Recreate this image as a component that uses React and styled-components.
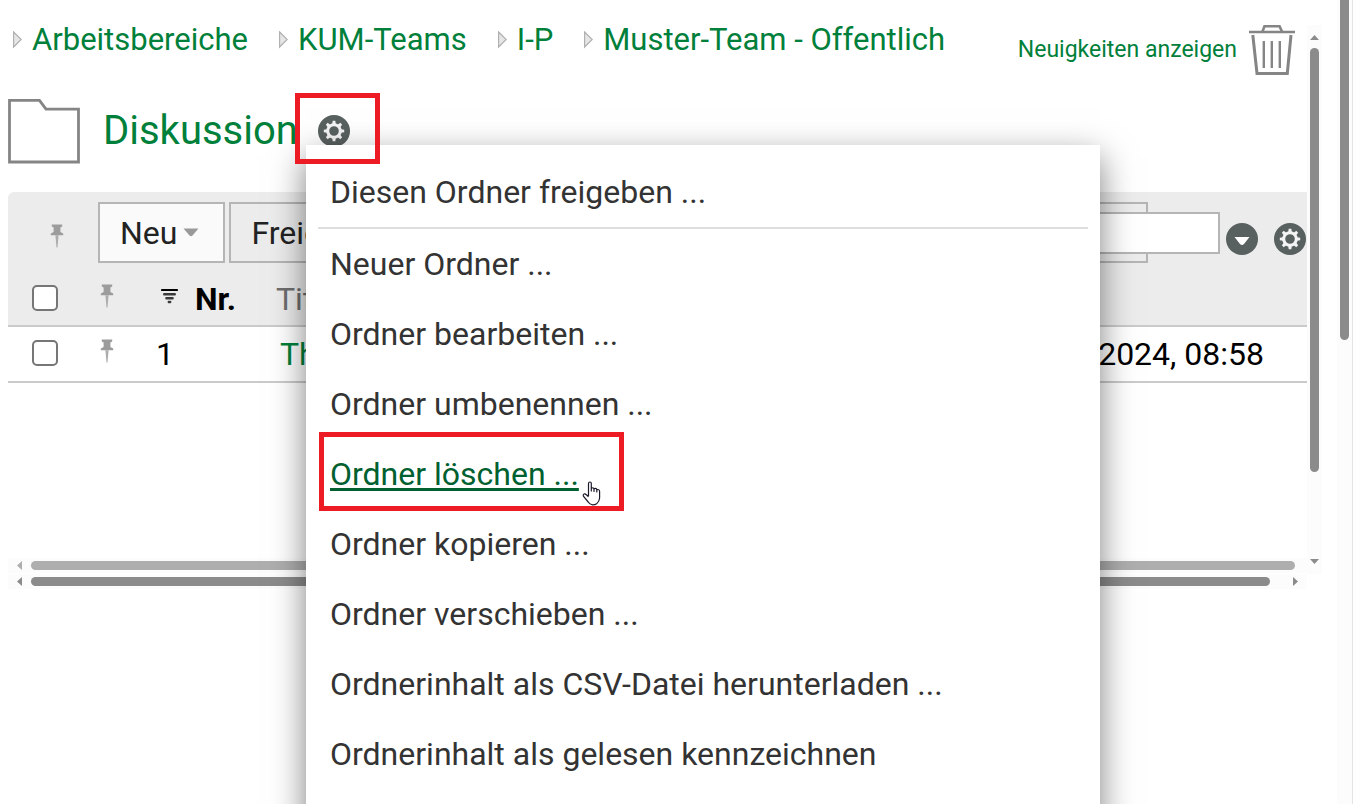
import React from 'react';
import styled, { createGlobalStyle } from 'styled-components';

const green = '#00803a';
const darkGreen = '#006030';
const barGray = '#8b8b8b';
const barGrayLight = '#aeaeae';
const line = '#b5b5b5';

const GlobalStyle = createGlobalStyle`
  * {
    box-sizing: border-box;
  }
  body {
    margin: 0;
    background: #fff;
    color: #000;
    font-family: Roboto, 'Noto Sans', sans-serif;
    font-size: 32px;
    line-height: 40px;
  }
`;

const Shell = styled.div`
  position: relative;
  display: flex;
  height: 100vh;
  overflow: hidden;
`;

const Main = styled.main`
  flex: 1;
  min-width: 0;
  padding: 0 15px 0 8px;
`;

const Pane = styled.div`
  display: flex;
  height: 574px;
`;

const Content = styled.div`
  flex: 1;
  min-width: 0;
  display: flex;
  flex-direction: column;
`;

const Header = styled.header`
  display: flex;
  align-items: center;
  justify-content: space-between;
  height: 60px;
  margin-top: 20px;
  padding-right: 12px;
`;

const Breadcrumbs = styled.nav`
  display: flex;
  align-self: flex-start;
  gap: 30px;
  padding-left: 4px;
`;

const Crumb = styled.span`
  display: flex;
  align-items: center;
  gap: 10px;
  white-space: nowrap;
`;

const Link = styled.a`
  color: ${green};
  text-decoration: none;
  font-size: ${props => props.$size || 32}px;
`;

const HeaderLinks = styled.div`
  display: flex;
  align-items: center;
  gap: 12px;
`;

const IconButton = styled.button`
  display: flex;
  padding: 0;
  border: 0;
  background: none;
  cursor: pointer;
`;

const TitleRow = styled.div`
  display: flex;
  align-items: center;
  height: 66px;
  margin-top: 18px;
`;

const Title = styled.h1`
  margin: 0 20px 0 23px;
  color: ${green};
  font-size: 40px;
  line-height: 48px;
  font-weight: 400;
`;

const Toolbar = styled.div`
  position: relative;
  display: flex;
  gap: 4px;
  height: 80px;
  margin-top: 28px;
  padding: 10px 159px 9px 42px;
  background: #ececec;
  border-radius: 6px 0 0 0;
`;

const ToolbarPin = styled.span`
  display: flex;
  align-items: center;
  width: 44px;
  padding-top: 6px;
`;

const ToolButton = styled.button`
  display: flex;
  align-items: center;
  gap: 6px;
  height: 61px;
  padding: 0 ${props => (props.$wide ? '20px' : '24px')} 0 20px;
  border: 2px solid ${line};
  background: ${props => (props.$active ? '#fafafa' : '#ececec')};
  color: #222;
  font: inherit;
  white-space: nowrap;
  flex: ${props => (props.$wide ? '1' : 'none')};
`;

// the search box lies over the end of the button strip
const Search = styled.form`
  position: absolute;
  top: 19px;
  right: 1px;
  display: flex;
  align-items: center;
`;

const SearchInput = styled.input`
  width: 300px;
  height: 42px;
  margin-right: 6px;
  padding: 0 8px;
  border: 2px solid ${line};
  background: #fff;
  font: inherit;
`;

const SearchIcons = styled.div`
  display: flex;
  gap: 16px;
  padding-top: 12px;
`;

const Table = styled.table`
  width: 100%;
  table-layout: fixed;
  border-collapse: collapse;

  th,
  td {
    height: 54px;
    padding: 0;
    text-align: left;
    font-weight: 400;
    white-space: nowrap;
    border-bottom: 2px solid #cacaca;
  }
  thead {
    background: #ececec;
  }
  td {
    height: 56px;
  }
`;

const Col = styled.col`
  width: ${props => props.$width};
`;

const Cell = styled.div`
  display: flex;
  align-items: center;
  justify-content: ${props => (props.$end ? 'flex-end' : 'flex-start')};
  gap: 17px;
  padding: 0 ${props => (props.$end ? '43px' : '0')} ${props => props.$raise || 0}px
    ${props => props.$left || 0}px;
  color: ${props => props.$color || '#000'};
  font-weight: ${props => (props.$bold ? 700 : 400)};

  svg {
    flex: none;
  }
`;

const Checkbox = styled.input`
  appearance: none;
  width: 26px;
  height: 26px;
  margin: 0;
  border: 2px solid #767676;
  border-radius: 5px;
  background: #fff;
`;

const VerticalBar = styled.div`
  display: flex;
  flex-direction: column;
  align-items: center;
  gap: 8px;
  width: 15px;
  margin-top: 25px;
  padding: 10px 0;
  background: #fcfcfc;
`;

const HorizontalBar = styled.div`
  display: flex;
  align-items: center;
  gap: 9px;
  height: 15px;
  margin-right: ${props => (props.$inner ? '0' : '15px')};
  margin-top: ${props => (props.$inner ? 'auto' : '0')};
  margin-bottom: ${props => (props.$inner ? '1px' : '0')};
  padding: 0 ${props => (props.$inner ? '12px' : '9px')} 0 9px;
  background: #fcfcfc;
`;

const Thumb = styled.div`
  flex: ${props => props.$size || '1'};
  width: ${props => (props.$vertical ? '9px' : 'auto')};
  height: ${props => (props.$vertical ? 'auto' : '9px')};
  border-radius: 5px;
  background: ${props => (props.$light ? barGrayLight : barGray)};
`;

const Spacer = styled.div`
  flex: ${props => props.$size};
`;

const WindowBar = styled.div`
  width: 16px;
  padding-left: 3px;
  background: #fcfcfc;
  border-right: 1px solid #e4e4e4;
`;

const WindowThumb = styled.div`
  width: 9px;
  height: 340px;
  border-radius: 0 0 5px 5px;
  background: ${barGray};
`;

const Menu = styled.ul`
  position: absolute;
  top: 145px;
  left: 306px;
  right: 253px;
  bottom: -60px;
  margin: 0;
  padding: 12px;
  list-style: none;
  background: #fff;
  box-shadow: 0 12px 32px rgba(0, 0, 0, 0.5);
`;

const MenuItem = styled.li`
  padding: 15px 12px;
  border-bottom: ${props => (props.$separated ? '2px solid #dedede' : '0')};
`;

const MenuLink = styled.a`
  color: ${props => (props.$hovered ? darkGreen : '#333')};
  text-decoration: ${props => (props.$hovered ? 'underline' : 'none')};
  text-decoration-thickness: 3px;
  text-underline-offset: 3px;
  text-decoration-skip-ink: none;
`;

const Mark = styled.div`
  position: absolute;
  top: ${props => props.$top}px;
  left: ${props => props.$left}px;
  width: ${props => props.$width}px;
  height: ${props => props.$height}px;
  border: 5px solid #ed1c24;
  pointer-events: none;
`;

const Pointer = styled.svg`
  position: absolute;
  top: 481px;
  left: 582px;
`;

function CrumbArrow() {
  return (
    <svg width="10" height="18" viewBox="0 0 10 18" aria-hidden="true">
      <path d="M1.6 1 L9.2 8.5 L1.6 16 Z" fill="#e6e6e6" stroke="#b0b0b0" strokeWidth="1.2" />
    </svg>
  );
}

function FolderIcon() {
  return (
    <svg width="72" height="66" viewBox="0 0 72 66" aria-hidden="true">
      <path d="M1.5 2.4 H31.5 L38 11.2 H70.5 V64 H1.5 Z" fill="#fff" stroke="#858585" strokeWidth="2.8" />
    </svg>
  );
}

function TrashIcon() {
  return (
    <svg width="46" height="50" viewBox="0 0 46 50" fill="none" stroke="#858585" aria-hidden="true">
      <path d="M0 7 H46" strokeWidth="2.6" />
      <path d="M13.5 6.5 L15.5 1.2 H30.5 L33 6.5" strokeWidth="2.6" />
      <path d="M3.8 10 L8 48.5 H38.3 L42 10" strokeWidth="3" />
      <path d="M14.8 16 V43 M22.8 16 V43 M30.8 16 V43" strokeWidth="2.4" />
    </svg>
  );
}

function GearIcon() {
  const teeth = [0, 45, 90, 135, 180, 225, 270, 315];
  return (
    <svg width="32" height="32" viewBox="0 0 32 32" aria-hidden="true">
      <circle cx="16" cy="16" r="16" fill="#596060" />
      <circle cx="16" cy="16" r="6.3" fill="none" stroke="#f4f4f4" strokeWidth="3" />
      {teeth.map(angle => (
        <path key={angle} d="M14.2 9 L14.7 5.8 H17.3 L17.8 9 Z" fill="#f4f4f4" transform={`rotate(${angle} 16 16)`} />
      ))}
    </svg>
  );
}

function DropIcon() {
  return (
    <svg width="32" height="32" viewBox="0 0 32 32" aria-hidden="true">
      <circle cx="16" cy="16" r="16" fill="#596060" />
      <path d="M8.5 14 H23.5 L18 21 Q16 23 14 21 Z" fill="#fff" />
    </svg>
  );
}

function PinIcon() {
  return (
    <svg width="14" height="24" viewBox="0 0 14 24" aria-hidden="true">
      <path d="M1.8 0.5 H12.2 V2.6 L10.4 3.4 V8 L13.2 9.6 V11.2 H0.8 V9.6 L3.6 8 V3.4 L1.8 2.6 Z" fill="#9c9c9c" />
      <path d="M5.4 11.2 H8.6 L7.5 23.5 H6.5 Z" fill="#adadad" />
    </svg>
  );
}

function CaretIcon() {
  return (
    <svg width="16" height="9" viewBox="0 0 16 9" aria-hidden="true">
      <path d="M0.5 0.5 H15.5 L9.5 7.5 Q8 9 6.5 7.5 Z" fill="#999" />
    </svg>
  );
}

function SortIcon() {
  return (
    <svg width="17" height="22" viewBox="0 0 17 22" strokeLinecap="round" aria-hidden="true">
      <path d="M1 2 H16" stroke="#000" strokeWidth="2.2" />
      <path d="M3.2 6.2 H13.8 M5.4 10.2 H11.6 M7.8 14 H9.2" stroke="#3a3a3a" strokeWidth="2.4" />
    </svg>
  );
}

const arrowShapes = {
  up: [9, 5, '0,5 4.5,0 9,5'],
  down: [9, 5, '0,0 9,0 4.5,5'],
  left: [5, 9, '5,0 5,9 0,4.5'],
  right: [5, 9, '0,0 5,4.5 0,9']
};

function BarArrow({ direction, light }) {
  const [width, height, points] = arrowShapes[direction];
  return (
    <svg width={width} height={height} aria-hidden="true">
      <polygon points={points} fill={light ? barGrayLight : barGray} />
    </svg>
  );
}

function HandPointer() {
  return (
    <Pointer width="19" height="25" viewBox="0 0 19 25" aria-hidden="true">
      <path
        d="M6.5 15 V2.5 Q6.5 1 8 1 Q9.3 1 9.3 2.5 V10 V8 Q9.3 6.6 10.7 6.8 Q12 6.8 12 8.2 V10.5 V8.4 Q12.2 7.2 13.4 7.3 Q14.8 7.4 14.8 8.8 V11 V9.4 Q15 8.4 16 8.5 Q17.6 8.7 17.6 10.2 V17 Q17.2 20.6 15 22.4 Q13 23.8 10.5 23.8 Q7.8 23.6 6.2 21 L1.4 15.2 Q0.8 13.6 2 13 Q3.3 12.6 4.4 13.8 L6.5 15.8"
        fill="#fff"
        stroke="#1a1a2c"
        strokeWidth="1.2"
        strokeLinejoin="round"
      />
    </Pointer>
  );
}

const crumbs = ['Arbeitsbereiche', 'KUM-Teams', 'I-P', 'Muster-Team - Offentlich'];

const menuItems = [
  { label: 'Diesen Ordner freigeben ...', separated: true },
  { label: 'Neuer Ordner ...' },
  { label: 'Ordner bearbeiten ...' },
  { label: 'Ordner umbenennen ...' },
  { label: 'Ordner löschen ...', hovered: true },
  { label: 'Ordner kopieren ...' },
  { label: 'Ordner verschieben ...' },
  { label: 'Ordnerinhalt als CSV-Datei herunterladen ...' },
  { label: 'Ordnerinhalt als gelesen kennzeichnen' }
];

function FolderToolbar() {
  return (
    <Toolbar>
      <ToolbarPin>
        <PinIcon />
      </ToolbarPin>
      <ToolButton type="button" $active>
        Neu <CaretIcon />
      </ToolButton>
      <ToolButton type="button" $wide>
        Freigeben
      </ToolButton>
      <Search onSubmit={e => e.preventDefault()}>
        <SearchInput type="text" aria-label="Suche" />
        <SearchIcons>
          <IconButton type="button" aria-label="Suchoptionen">
            <DropIcon />
          </IconButton>
          <IconButton type="button" aria-label="Einstellungen">
            <GearIcon />
          </IconButton>
        </SearchIcons>
      </Search>
    </Toolbar>
  );
}

function FolderTable() {
  return (
    <Table>
      <colgroup>
        <Col $width="72px" />
        <Col $width="68px" />
        <Col $width="128px" />
        <Col $width="auto" />
        <Col $width="300px" />
      </colgroup>
      <thead>
        <tr>
          <th>
            <Cell $left={24} $raise={2}>
              <Checkbox type="checkbox" aria-label="Alle auswählen" />
            </Cell>
          </th>
          <th>
            <Cell $left={20} $raise={6}>
              <PinIcon />
            </Cell>
          </th>
          <th>
            <Cell $left={13} $bold>
              <SortIcon /> Nr.
            </Cell>
          </th>
          <th>
            <Cell $color="#6e6e6e">Titel</Cell>
          </th>
          <th />
        </tr>
      </thead>
      <tbody>
        <tr>
          <td>
            <Cell $left={24} $raise={2}>
              <Checkbox type="checkbox" aria-label="Eintrag 1 auswählen" />
            </Cell>
          </td>
          <td>
            <Cell $left={20} $raise={6}>
              <PinIcon />
            </Cell>
          </td>
          <td>
            <Cell $left={8}>1</Cell>
          </td>
          <td>
            <Cell $left={4}>
              <Link href="#thema">Thema</Link>
            </Cell>
          </td>
          <td>
            <Cell $end>2024, 08:58</Cell>
          </td>
        </tr>
      </tbody>
    </Table>
  );
}

export default function App() {
  return (
    <>
      <GlobalStyle />
      <Shell>
        <Main>
          <Pane>
            <Content>
              <Header>
                <Breadcrumbs>
                  {crumbs.map(crumb => (
                    <Crumb key={crumb}>
                      <CrumbArrow />
                      <Link href="#ordner" $size={31}>
                        {crumb}
                      </Link>
                    </Crumb>
                  ))}
                </Breadcrumbs>
                <HeaderLinks>
                  <Link href="#neuigkeiten" $size={23}>
                    Neuigkeiten anzeigen
                  </Link>
                  <IconButton type="button" aria-label="Papierkorb">
                    <TrashIcon />
                  </IconButton>
                </HeaderLinks>
              </Header>
              <TitleRow>
                <FolderIcon />
                <Title>Diskussion</Title>
                <IconButton type="button" aria-label="Ordnermenü">
                  <GearIcon />
                </IconButton>
              </TitleRow>
              <FolderToolbar />
              <FolderTable />
              <HorizontalBar $inner>
                <BarArrow direction="left" light />
                <Thumb $light />
              </HorizontalBar>
            </Content>
            <VerticalBar>
              <BarArrow direction="up" />
              <Thumb $vertical $size="424" />
              <Spacer $size="71" />
              <BarArrow direction="down" />
            </VerticalBar>
          </Pane>
          <HorizontalBar>
            <BarArrow direction="left" />
            <Thumb $size="1239" />
            <Spacer $size="5" />
            <BarArrow direction="right" />
          </HorizontalBar>
        </Main>
        <WindowBar>
          <WindowThumb />
        </WindowBar>
        <Menu>
          {menuItems.map(item => (
            <MenuItem key={item.label} $separated={item.separated}>
              <MenuLink href="#menu" $hovered={item.hovered}>
                {item.label}
              </MenuLink>
            </MenuItem>
          ))}
        </Menu>
        <Mark $top={93} $left={295} $width={85} $height={71} />
        <Mark $top={432} $left={319} $width={305} $height={79} />
        <HandPointer />
      </Shell>
    </>
  );
}
